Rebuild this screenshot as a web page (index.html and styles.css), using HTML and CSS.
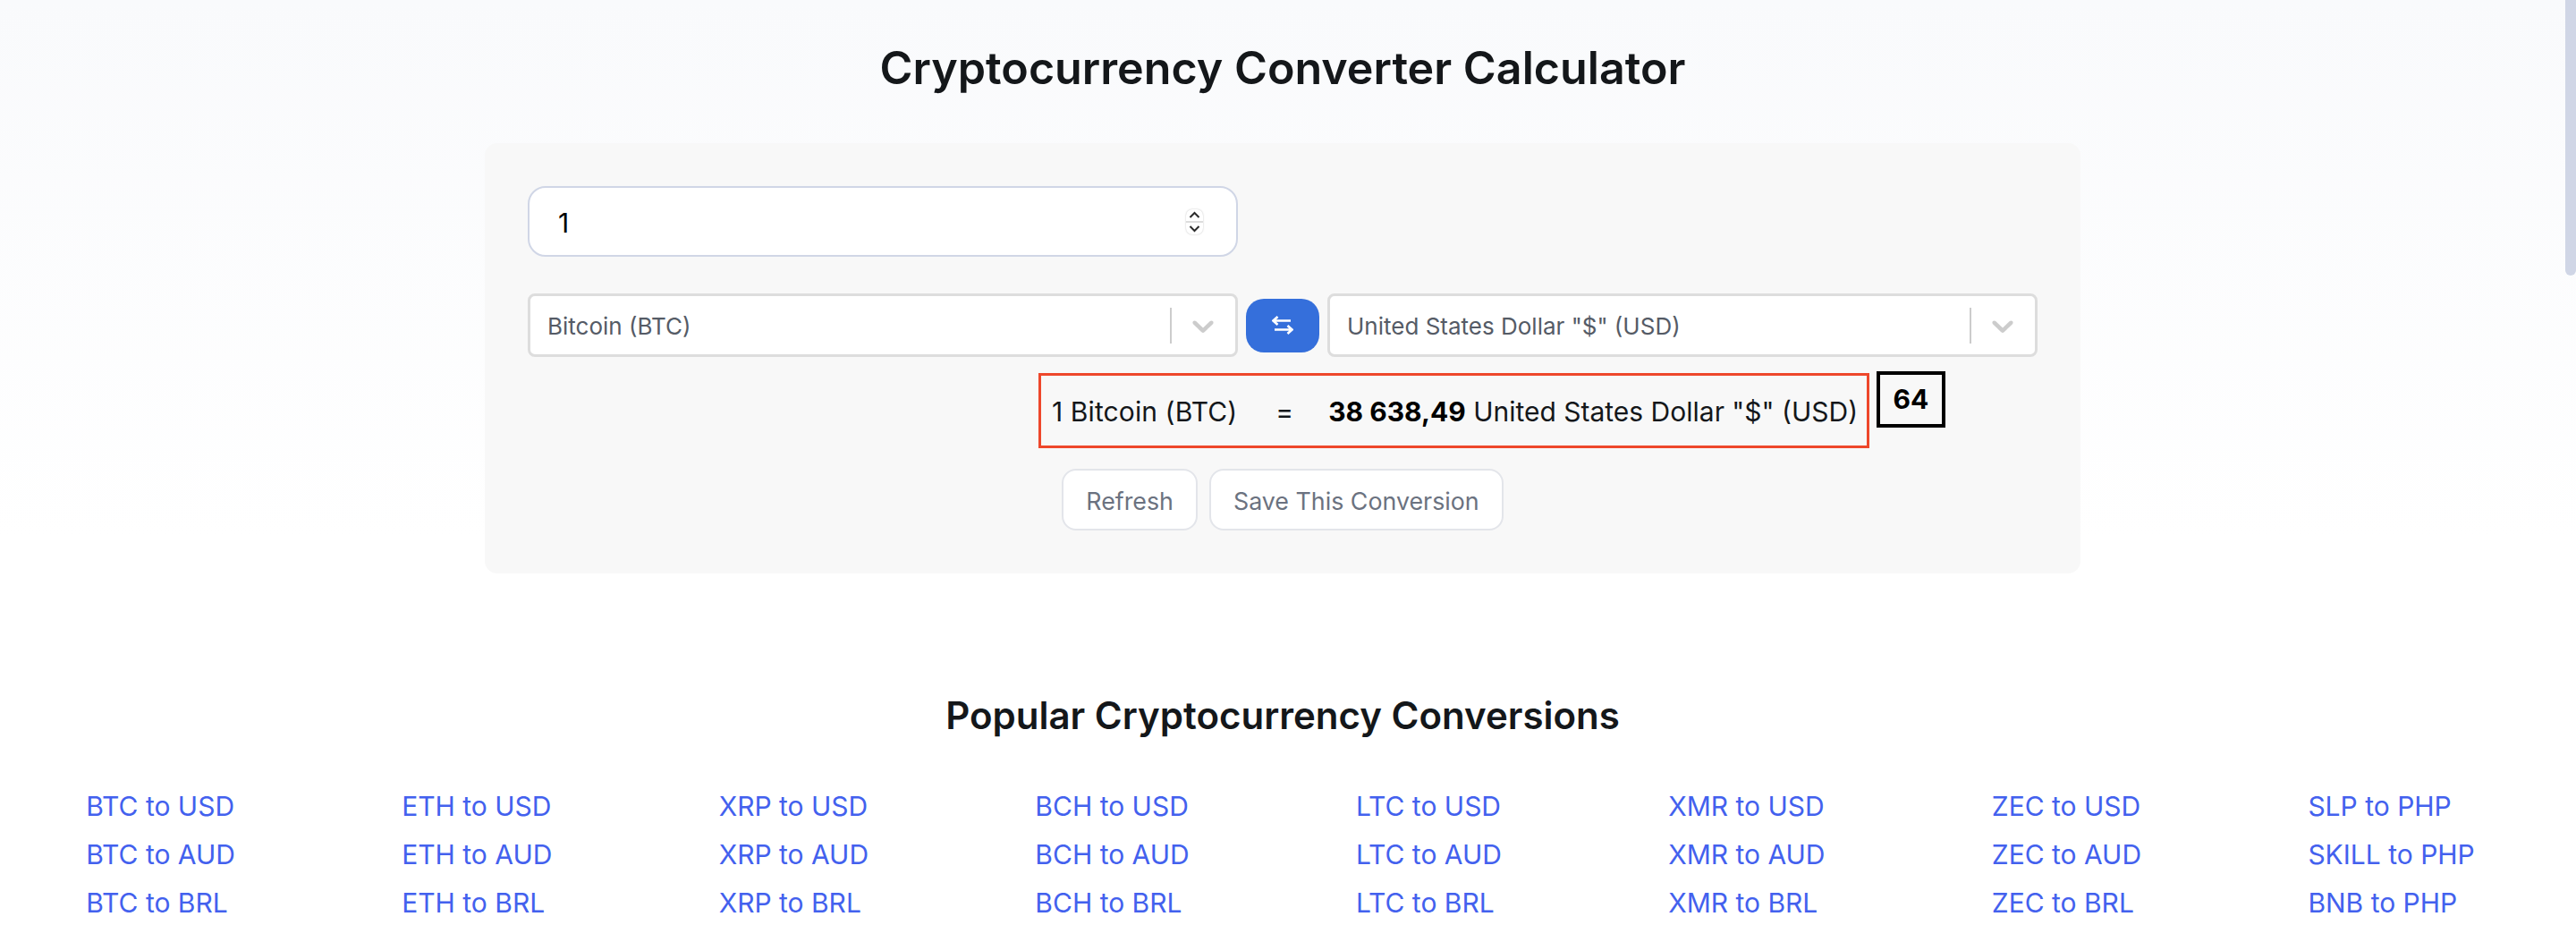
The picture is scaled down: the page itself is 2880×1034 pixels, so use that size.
FILE: index.html
```html
<!DOCTYPE html>
<html lang="en">
<head>
<meta charset="utf-8">
<title>Cryptocurrency Converter Calculator</title>
<link rel="stylesheet" href="styles.css">
</head>
<body>
<div class="page">
  <main class="main">
    <h1 class="title">Cryptocurrency Converter Calculator</h1>
    <section class="card">
      <div class="amount">
        <input class="amount-input" type="text" value="1" aria-label="Amount">
        <span class="spinner">
          <svg class="spin-icon" viewBox="0 0 19 13"><path d="M4.5 9l5-5 5 5"/></svg>
          <span class="spin-line"></span>
          <svg class="spin-icon" viewBox="0 0 19 13"><path d="M4.5 4l5 5 5-5"/></svg>
        </span>
      </div>
      <div class="pair">
        <div class="select">
          <span class="select-value">Bitcoin (BTC)</span>
          <span class="select-sep"></span>
          <svg class="select-arrow" viewBox="0 0 20 20"><path d="M4.516 7.548c0.436-0.446 1.043-0.481 1.576 0l3.908 3.747 3.908-3.747c0.533-0.481 1.141-0.446 1.574 0 0.436 0.445 0.408 1.197 0 1.615-0.406 0.418-4.695 4.502-4.695 4.502-0.217 0.223-0.502 0.335-0.787 0.335s-0.57-0.112-0.789-0.335c0 0-4.287-4.084-4.695-4.502s-0.436-1.17 0-1.615z"/></svg>
        </div>
        <button class="swap" aria-label="Swap">
          <svg class="swap-icon" viewBox="0 0 24 21"><path d="M21 5.5H1.5M6.5 1L1.5 5.5l5 4.5"/><path d="M3 15.5h19.5M17.5 11l5 4.5-5 4.5"/></svg>
        </button>
        <div class="select">
          <span class="select-value">United States Dollar "$" (USD)</span>
          <span class="select-sep"></span>
          <svg class="select-arrow" viewBox="0 0 20 20"><path d="M4.516 7.548c0.436-0.446 1.043-0.481 1.576 0l3.908 3.747 3.908-3.747c0.533-0.481 1.141-0.446 1.574 0 0.436 0.445 0.408 1.197 0 1.615-0.406 0.418-4.695 4.502-4.695 4.502-0.217 0.223-0.502 0.335-0.787 0.335s-0.57-0.112-0.789-0.335c0 0-4.287-4.084-4.695-4.502s-0.436-1.17 0-1.615z"/></svg>
        </div>
      </div>
      <div class="result-row">
        <div class="result">
          <span class="result-from">1 Bitcoin (BTC)</span>
          <span class="result-eq">=</span>
          <span><b class="result-num">38 638,49</b> United States Dollar "$" (USD)</span>
        </div>
        <div class="badge">64</div>
      </div>
      <div class="actions">
        <button class="btn">Refresh</button>
        <button class="btn">Save This Conversion</button>
      </div>
    </section>
    <h2 class="subtitle">Popular Cryptocurrency Conversions</h2>
    <div class="links">
      <ul class="col"><li><a href="#">BTC to USD</a></li><li><a href="#">BTC to AUD</a></li><li><a href="#">BTC to BRL</a></li></ul>
      <ul class="col"><li><a href="#">ETH to USD</a></li><li><a href="#">ETH to AUD</a></li><li><a href="#">ETH to BRL</a></li></ul>
      <ul class="col"><li><a href="#">XRP to USD</a></li><li><a href="#">XRP to AUD</a></li><li><a href="#">XRP to BRL</a></li></ul>
      <ul class="col"><li><a href="#">BCH to USD</a></li><li><a href="#">BCH to AUD</a></li><li><a href="#">BCH to BRL</a></li></ul>
      <ul class="col"><li><a href="#">LTC to USD</a></li><li><a href="#">LTC to AUD</a></li><li><a href="#">LTC to BRL</a></li></ul>
      <ul class="col"><li><a href="#">XMR to USD</a></li><li><a href="#">XMR to AUD</a></li><li><a href="#">XMR to BRL</a></li></ul>
      <ul class="col"><li><a href="#">ZEC to USD</a></li><li><a href="#">ZEC to AUD</a></li><li><a href="#">ZEC to BRL</a></li></ul>
      <ul class="col"><li><a href="#">SLP to PHP</a></li><li><a href="#">SKILL to PHP</a></li><li><a href="#">BNB to PHP</a></li></ul>
    </div>
  </main>
  <div class="scroll-track"><div class="scroll-thumb"></div></div>
</div>
</body>
</html>
```
FILE: styles.css
```css
* { box-sizing: border-box; }
html, body { margin: 0; height: 100%; overflow: hidden; }
body {
  font-family: Inter, "Liberation Sans", sans-serif;
  background: linear-gradient(180deg, #f9fafc 0, #ffffff 600px);
  color: #14171a;
}
.page { display: flex; height: 1034px; }
.main { flex: 1; min-width: 0; overflow: hidden; }
.scroll-track { width: 12px; flex: none; }
.scroll-thumb { height: 308px; background: #d0d6e6; border-radius: 0 0 6px 6px; }

.title {
  margin: 0;
  height: 160px;
  padding-top: 46px;
  font-size: 50.2px;
  line-height: 60px;
  font-weight: 600;
  text-align: center;
}
.card {
  width: 1784px;
  margin: 0 auto;
  padding: 48px;
  background: #f8f8f8;
  border-radius: 14px;
}
.amount {
  display: flex;
  align-items: center;
  width: 794px;
  height: 79px;
  padding: 0 33px 0 32px;
  background: #fff;
  border: 2px solid #d0d6e6;
  border-radius: 20px;
}
.amount-input {
  flex: 1;
  min-width: 0;
  height: 36px;
  margin-top: 2px;
  border: 0;
  outline: 0;
  padding: 0;
  background: transparent;
  font: 400 30px Inter, sans-serif;
  color: #000;
}
.spinner {
  display: flex;
  flex-direction: column;
  width: 19px;
  height: 28px;
  margin-right: 4px;
  background: #fff;
  border-radius: 7px;
  box-shadow: 0 0 2px rgba(0, 0, 0, .25);
}
.spin-icon {
  display: block;
  flex: 1;
  width: 19px;
  fill: none;
  stroke: #2a2a2a;
  stroke-width: 2;
}
.spin-line { height: 2px; background: #ddd; }
.pair {
  display: flex;
  align-items: center;
  gap: 9px;
  margin-top: 41px;
}
.select {
  display: flex;
  align-items: center;
  width: 794px;
  height: 71px;
  padding-left: 19px;
  background: #fff;
  border: 3px solid #ddd;
  border-radius: 8px;
}
.select-value {
  flex: 1;
  padding-top: 2px;
  font-size: 26px;
  color: #555b66;
}
.select-sep { width: 2px; height: 40px; background: #ccc; }
.select-arrow { width: 40px; height: 40px; margin: 0 16px 0 15px; fill: #ccc; }
.swap {
  display: flex;
  align-items: center;
  justify-content: center;
  width: 82px;
  height: 60px;
  padding: 0;
  background: #356fdb;
  border: 0;
  border-radius: 20px;
}
.swap-icon {
  width: 24px;
  height: 21px;
  fill: none;
  stroke: #fff;
  stroke-width: 2.6;
}
.result-row {
  display: flex;
  align-items: flex-start;
  gap: 8px;
  margin: 16px 0 0 571px;
}
.result {
  display: flex;
  align-items: center;
  width: 929px;
  height: 84px;
  margin-top: 2px;
  padding: 2px 0 0 12px;
  border: 3px solid #ee472b;
  font-size: 30px;
  color: #14171a;
}
.result-from { letter-spacing: .1px; }
.result-eq { margin: 0 39px 0 43px; }
.result-num { font-weight: 700; color: #000; }
.badge {
  width: 77px;
  height: 63px;
  border: 4px solid #000;
  font-size: 30px;
  font-weight: 700;
  line-height: 55px;
  text-align: center;
  color: #000;
}
.actions {
  display: flex;
  justify-content: center;
  gap: 13px;
  margin-top: 23px;
}
.btn {
  height: 69px;
  padding: 2px 25px 0;
  background: #fff;
  border: 2px solid #e3e5ea;
  border-radius: 16px;
  font: 400 26.8px Inter, sans-serif;
  color: #6b7280;
}
.subtitle {
  margin: 134px 0 0;
  font-size: 42px;
  line-height: 50px;
  font-weight: 600;
  text-align: center;
}
.links {
  display: flex;
  justify-content: space-around;
  margin-top: 49px;
  padding: 0 8px 0 3px;
}
.col { margin: 0; padding: 0; list-style: none; }
.col li { height: 54px; font-size: 30px; line-height: 54px; }
.col a { color: #4361ee; text-decoration: none; }
```
